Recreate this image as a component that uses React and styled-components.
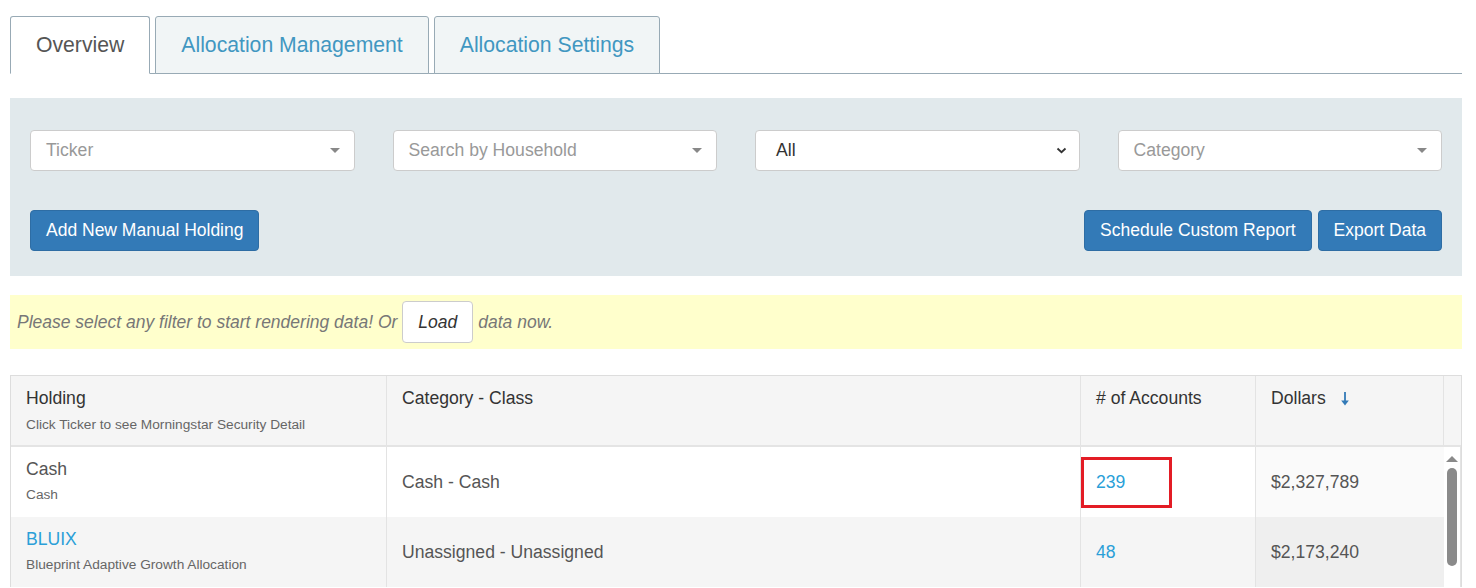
import React from 'react'
import styled, { createGlobalStyle } from 'styled-components'

const GlobalStyle = createGlobalStyle`
  body {
    margin: 0;
    background: #fff;
    font-family: "Liberation Sans", Arial, sans-serif;
    color: #333;
  }
`

const Page = styled.div`
  padding: 16px 14px 0 10px;
`

const TabBar = styled.div`
  display: flex;
  gap: 5px;
  border-bottom: 1px solid #98aab5;
`

const Tab = styled.div`
  height: 56px;
  padding: 0 25px;
  display: flex;
  align-items: center;
  font-size: 21.2px;
  margin-bottom: -1px;
  border: 1px solid #98aab5;
  border-radius: 3px 3px 0 0;
  color: ${p => (p.$active ? '#555' : '#4197c1')};
  background: ${p => (p.$active ? '#fff' : '#f1f5f6')};
  border-bottom-color: ${p => (p.$active ? '#fff' : '#98aab5')};
`

const FilterPanel = styled.div`
  margin-top: 24px;
  background: #e1e9ec;
  padding: 32px 20px 25px;
  display: flex;
  flex-direction: column;
  gap: 39px;
`

const FilterRow = styled.div`
  display: grid;
  grid-template-columns: repeat(4, 1fr);
  column-gap: 38px;
`

const Field = styled.div`
  height: 41px;
  box-sizing: border-box;
  background: #fff;
  border: 1px solid #ccc;
  border-radius: 4px;
  display: flex;
  align-items: center;
  justify-content: space-between;
  padding: ${p => (p.$native ? '0 12px 0 20px' : '0 12px 0 15px')};
  font-size: 17.6px;
  color: ${p => (p.$placeholder ? '#999' : '#333')};
`

const Caret = styled.span`
  width: 0;
  height: 0;
  border-left: 5px solid transparent;
  border-right: 5px solid transparent;
  border-top: 5px solid #888;
  margin-right: 2px;
`

const ButtonRow = styled.div`
  display: flex;
  gap: 6px;
`

const Spacer = styled.div`
  flex: 1;
`

const PrimaryButton = styled.button`
  height: 41px;
  padding: 0 15px;
  background: #337ab7;
  border: 1px solid #2e6da4;
  border-radius: 4px;
  color: #fff;
  font-family: inherit;
  font-size: 17.5px;
`

const Notice = styled.div`
  margin-top: 19px;
  height: 54px;
  background: #ffffcc;
  display: flex;
  align-items: center;
  gap: 5px;
  padding: 0 7px;
  font-style: italic;
  font-size: 17.5px;
  color: #777;
`

const LoadButton = styled.button`
  height: 42px;
  padding: 0 15px;
  background: #fff;
  border: 1px solid #ccc;
  border-radius: 4px;
  font-family: inherit;
  font-style: italic;
  font-size: 17.5px;
  color: #333;
`

const Table = styled.div`
  margin-top: 26px;
  border: 1px solid #ddd;
  border-bottom: none;
`

const Row = styled.div`
  display: grid;
  grid-template-columns: 376px 694px 175px 188px 1fr;
  height: ${p => (p.$head ? '69px' : '70px')};
  background: ${p => p.$bg || '#fff'};
  border-bottom: ${p => (p.$head ? '2px solid #e4e4e4' : 'none')};
`

const Cell = styled.div`
  box-sizing: border-box;
  padding: ${p => (p.$top ? '12px 15px 0' : '0 15px')};
  display: flex;
  flex-direction: column;
  justify-content: ${p => (p.$top ? 'flex-start' : 'center')};
  border-right: 1px solid #e3e3e3;
  font-size: 17.6px;
  color: ${p => p.$color || '#555'};
  background: ${p => p.$bg || 'transparent'};
  &:last-child {
    border-right: none;
  }
`

const HeadText = styled.span`
  color: #333;
  display: flex;
  align-items: center;
  gap: 14px;
`

const SubText = styled.span`
  margin-top: ${p => (p.$head ? '8px' : '7px')};
  font-size: 13.7px;
  color: #666;
`

const Ticker = styled.span`
  margin-top: -3px;
  color: ${p => (p.$link ? '#2a9fd8' : '#555')};
`

const Link = styled.span`
  color: #2a9fd8;
`

const Highlight = styled.div`
  position: absolute;
  left: -15px;
  top: -15px;
  width: 91px;
  height: 51px;
  box-sizing: border-box;
  border: 3px solid #e31c25;
`

const Marked = styled.span`
  position: relative;
  color: #2a9fd8;
`

const Body = styled.div`
  display: grid;
  grid-template-columns: 1433px 1fr;
`

const Track = styled.div`
  background: #fff;
  border-right: 1px solid #e3e3e3;
  display: flex;
  flex-direction: column;
  align-items: center;
  padding-top: 9px;
  gap: 6px;
`

const TrackArrow = styled.span`
  width: 0;
  height: 0;
  border-left: 6px solid transparent;
  border-right: 6px solid transparent;
  border-bottom: 6px solid #8a8a8a;
`

const Thumb = styled.span`
  width: 10px;
  height: 98px;
  border-radius: 5px;
  background: #8a8a8a;
`

const rows = [
  { ticker: 'Cash', name: 'Cash', link: false, cls: 'Cash - Cash', accounts: '239', dollars: '$2,327,789', bg: '#fff', dbg: '#fafafa', mark: true },
  { ticker: 'BLUIX', name: 'Blueprint Adaptive Growth Allocation', link: true, cls: 'Unassigned - Unassigned', accounts: '48', dollars: '$2,173,240', bg: '#f5f5f5', dbg: '#efefef' },
]

const DownArrow = () => (
  <svg width="10" height="16" viewBox="0 0 10 16">
    <path d="M5 1v12" stroke="#337ab7" strokeWidth="1.8" fill="none" />
    <path d="M1.2 9.5L5 14.5l3.8-5z" fill="#337ab7" />
  </svg>
)

const Chevron = () => (
  <svg width="11" height="7" viewBox="0 0 11 7">
    <path d="M1.5 1.5L5.5 5.2l4-3.7" stroke="#333" strokeWidth="1.8" fill="none" />
  </svg>
)

export default function App() {
  return (
    <Page>
      <GlobalStyle />
      <TabBar>
        <Tab $active>Overview</Tab>
        <Tab>Allocation Management</Tab>
        <Tab>Allocation Settings</Tab>
      </TabBar>

      <FilterPanel>
        <FilterRow>
          <Field $placeholder>Ticker<Caret /></Field>
          <Field $placeholder>Search by Household<Caret /></Field>
          <Field $native>All<Chevron /></Field>
          <Field $placeholder>Category<Caret /></Field>
        </FilterRow>
        <ButtonRow>
          <PrimaryButton>Add New Manual Holding</PrimaryButton>
          <Spacer />
          <PrimaryButton>Schedule Custom Report</PrimaryButton>
          <PrimaryButton>Export Data</PrimaryButton>
        </ButtonRow>
      </FilterPanel>

      <Notice>
        Please select any filter to start rendering data! Or
        <LoadButton>Load</LoadButton>
        data now.
      </Notice>

      <Table>
        <Row $head $bg="#f5f5f5">
          <Cell $top>
            <HeadText>Holding</HeadText>
            <SubText $head>Click Ticker to see Morningstar Security Detail</SubText>
          </Cell>
          <Cell $top><HeadText>Category - Class</HeadText></Cell>
          <Cell $top><HeadText># of Accounts</HeadText></Cell>
          <Cell $top><HeadText>Dollars <DownArrow /></HeadText></Cell>
          <Cell />
        </Row>
        <Body>
          <div>
            {rows.map(r => (
              <Row key={r.ticker} $bg={r.bg}>
                <Cell>
                  <Ticker $link={r.link}>{r.ticker}</Ticker>
                  <SubText>{r.name}</SubText>
                </Cell>
                <Cell>{r.cls}</Cell>
                <Cell>
                  {r.mark ? (
                    <Marked>{r.accounts}<Highlight /></Marked>
                  ) : (
                    <Link>{r.accounts}</Link>
                  )}
                </Cell>
                <Cell $bg={r.dbg}>{r.dollars}</Cell>
              </Row>
            ))}
          </div>
          <Track>
            <TrackArrow />
            <Thumb />
          </Track>
        </Body>
      </Table>
    </Page>
  )
}
